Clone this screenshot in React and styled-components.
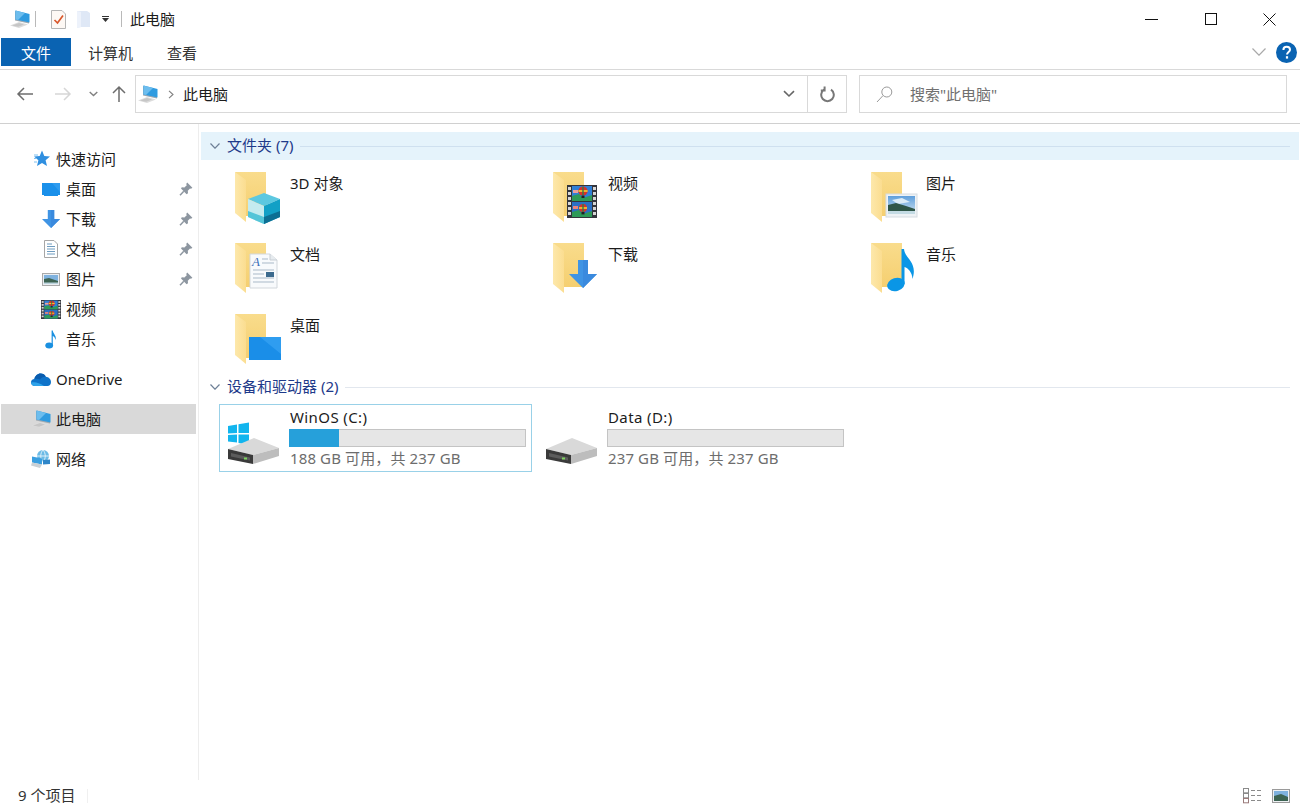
import React from 'react'
import styled, { createGlobalStyle } from 'styled-components'

const Global = createGlobalStyle`
  html, body { margin: 0; padding: 0; background: #fff; overflow: hidden; }
  body { font-family: "Noto Sans", "Noto Sans CJK SC", sans-serif; font-size: 15px; color: #1c1c1c; }
  * { box-sizing: border-box; }
  svg { display: block; flex-shrink: 0; }
`

const Window = styled.div`
  width: 1300px;
  height: 811px;
  display: flex;
  flex-direction: column;
`
const TitleBar = styled.div`
  height: 38px;
  display: flex;
  align-items: center;
  padding: 0 1px 0 10px;
`
const QuickSep = styled.span`
  width: 1px;
  height: 16px;
  background: #b9b9b9;
  margin: 0 ${p => p.$right}px 0 ${p => p.$left}px;
`
const TitleText = styled.span`
  font-size: 15px;
  line-height: 20px;
`
const WinControls = styled.div`
  margin-left: auto;
  display: flex;
`
const WinBtn = styled.div`
  width: 59px;
  height: 38px;
  display: flex;
  align-items: center;
  justify-content: center;
`
const Tabs = styled.div`
  height: 32px;
  display: flex;
  align-items: flex-start;
  border-bottom: 1px solid #d9d9d9;
  padding: 0 3px 0 1px;
`
const Tab = styled.div`
  height: 28px;
  padding: 0 ${p => (p.$file ? 20 : 17)}px;
  display: flex;
  align-items: center;
  font-size: 15px;
  background: ${p => (p.$file ? '#0a63b2' : 'transparent')};
  color: ${p => (p.$file ? '#fff' : '#333')};
`
const TabRight = styled.div`
  margin-left: auto;
  height: 28px;
  display: flex;
  align-items: center;
  gap: 10px;
`
const NavBar = styled.div`
  height: 54px;
  display: flex;
  align-items: flex-start;
  padding: 5px 0 0 0;
  border-bottom: 1px solid #d0d0d0;
`
const NavBtns = styled.div`
  width: 135px;
  height: 38px;
  padding-left: 16px;
  display: flex;
  align-items: center;
`
const AddressBox = styled.div`
  width: 712px;
  height: 38px;
  border: 1px solid #d9d9d9;
  display: flex;
  align-items: center;
  padding-left: 2px;
`
const Crumb = styled.span`
  font-size: 15px;
  margin: 0 0 2px 9px;
`
const AddrBtn = styled.div`
  width: ${p => p.$w}px;
  height: 36px;
  display: flex;
  align-items: center;
  justify-content: center;
  border-left: ${p => (p.$line ? '1px solid #d9d9d9' : 'none')};
  margin-left: ${p => (p.$auto ? 'auto' : 0)};
`
const SearchBox = styled.div`
  width: 428px;
  height: 38px;
  margin-left: 12px;
  border: 1px solid #d9d9d9;
  display: flex;
  align-items: center;
  padding-left: 16px;
  gap: 17px;
  color: #707070;
  font-size: 15px;
`
const SearchText = styled.span`
  margin-bottom: 2px;
`
const Body = styled.div`
  flex: 1;
  display: flex;
  min-height: 0;
`
const Sidebar = styled.nav`
  width: 199px;
  border-right: 1px solid #ededed;
  padding: 20px 0 0 1px;
  display: flex;
  flex-direction: column;
  gap: 10px;
`
const NavGroup = styled.div`
  display: flex;
  flex-direction: column;
`
const NavRow = styled.div`
  width: 195px;
  height: 30px;
  display: flex;
  align-items: center;
  gap: 5px;
  padding-left: ${p => (p.$child ? 40 : 30)}px;
  padding-right: 3px;
  background: ${p => (p.$active ? '#d9d9d9' : 'transparent')};
  font-size: 15px;
`
const NavLabel = styled.span`
  margin-bottom: ${p => (p.$latin ? 0 : 2)}px;
`
const Pin = styled.span`
  margin-left: auto;
`
const Main = styled.main`
  flex: 1;
  padding: 8px 1px 0 2px;
`
const SectionHead = styled.div`
  height: 28px;
  display: flex;
  align-items: center;
  padding: 0 9px 0 9px;
  gap: 7px;
  color: #1e3a8a;
  font-size: 15px;
  background: ${p => (p.$hot ? '#e5f3fb' : 'transparent')};
  margin-top: ${p => p.$top || 0}px;
`
const SectionLabel = styled.span`
  margin-bottom: 3px;
`
const HeadLine = styled.span`
  flex: 1;
  height: 1px;
  background: ${p => (p.$hot ? '#cfe0ef' : '#e2e7ee')};
`
const FolderGrid = styled.div`
  display: grid;
  grid-template-columns: repeat(3, 318px);
  row-gap: 15px;
  margin: 8px 0 0 18px;
`
const FolderItem = styled.div`
  height: 56px;
  padding-left: 13px;
  display: flex;
  gap: 8px;
`
const ItemName = styled.span`
  font-size: 15px;
  line-height: 20px;
  padding-top: 5px;
`
const DriveGrid = styled.div`
  display: grid;
  grid-template-columns: repeat(3, 318px);
  margin: 3px 0 0 18px;
`
const DriveCard = styled.div`
  width: 313px;
  height: 68px;
  border: 1px solid ${p => (p.$selected ? '#99d1e8' : 'transparent')};
  padding: 2px 5px 5px 7px;
  display: flex;
  gap: 10px;
`
const DriveIconWrap = styled.div`
  align-self: flex-end;
`
const DriveInfo = styled.div`
  flex: 1;
  display: flex;
  flex-direction: column;
`
const DriveName = styled.div`
  flex: none;
  height: 20px;
  line-height: 20px;
  font-size: 15px;
  padding-left: 1px;
  letter-spacing: 0.4px;
`
const DriveBar = styled.div`
  flex: none;
  height: 18px;
  width: 237px;
  margin-top: 2px;
  background: #e6e6e6;
  border: 1px solid #c4c4c4;
`
const DriveFill = styled.div`
  height: 18px;
  background: #26a0da;
  margin: -1px 0 0 -1px;
`
const DriveFree = styled.div`
  flex: none;
  height: 20px;
  line-height: 20px;
  margin-top: 1px;
  padding-left: 1px;
  color: #6d6d6d;
  font-size: 15px;
  letter-spacing: 0.12px;
`
const StatusBar = styled.footer`
  height: 31px;
  display: flex;
  align-items: center;
  padding: 0 10px 0 18px;
  font-size: 15px;
  color: #333;
`
const StatusText = styled.span`
  margin-bottom: 2px;
`
const StatusSep = styled.span`
  width: 1px;
  height: 14px;
  background: #f0f0f0;
  margin-left: 12px;
`
const ViewBtns = styled.div`
  margin-left: auto;
  display: flex;
  gap: 10px;
  align-items: center;
`

const PcIcon = ({ size = 20 }) => (
  <svg width={size} height={size * 0.9} viewBox="0 0 20 18">
    <polygon points="0,15.5 9,12 18,14.5 9,18" fill="#dcdcdc" />
    <polygon points="2,15.5 9,13 14,14.5 8,16.8" fill="#c6c6c6" />
    <polygon points="5,1 19,4.5 19,13.5 5,10.5" fill="#9fa9b1" />
    <polygon points="5.5,0.5 19.5,4 19.5,12.5 5.5,9.5" fill="#2f9be0" />
    <polygon points="5.5,0.5 15,3 8,9.9 5.5,9.5" fill="#6cbdee" />
  </svg>
)

const Chevron = ({ w = 10, h = 6, color = '#777', sw = 1.2 }) => (
  <svg width={w} height={h} viewBox={`0 0 ${w} ${h}`}>
    <path d={`M0.5 0.5 L${w / 2} ${h - 0.8} L${w - 0.5} 0.5`} fill="none" stroke={color} strokeWidth={sw} />
  </svg>
)

const StarIcon = () => (
  <svg width="20" height="18" viewBox="0 0 20 18">
    <polygon points="11,0.5 13.3,6 19,6.4 14.6,10.2 16,16 11,13 6,16 7.4,10.2 3,6.4 8.7,6" fill="#2f8fe0" />
    <path d="M3 5 H7 M3 8.5 H6 M3 12 H6" stroke="#7fc0ef" strokeWidth="1" />
  </svg>
)
const DesktopSmall = () => (
  <svg width="20" height="15" viewBox="0 0 20 15">
    <rect x="1" y="1" width="18" height="13" fill="#1a90ea" />
    <polygon points="11,1 19,1 19,10" fill="#2e9cef" />
    <rect x="1" y="13" width="2" height="1" fill="#fff" />
    <rect x="17" y="13" width="2" height="1" fill="#fff" />
  </svg>
)
const ArrowDown = ({ w = 20, h = 18 }) => (
  <svg width={w} height={h} viewBox="0 0 28 28">
    <polygon points="9,0 19,0 19,14 28,14 14,28 0,14 9,14" fill="#3f94e4" />
    <polygon points="14,0 19,0 19,14 28,14 14,28" fill="#3a8ade" />
  </svg>
)
const DocSmall = () => (
  <svg width="20" height="18" viewBox="0 0 20 18">
    <path d="M3.5 0.5 H13 L16.5 4 V17.5 H3.5 Z" fill="#fff" stroke="#a6a6a6" />
    <path d="M6 4 H11 M6 6.5 H14 M6 9 H14 M6 11.5 H14 M6 14 H14" stroke="#6f9cc0" strokeWidth="1" />
  </svg>
)
const PicSmall = () => (
  <svg width="20" height="15" viewBox="0 0 20 15">
    <rect x="1.5" y="1.5" width="17" height="12" fill="#eaeef2" stroke="#a9a9a9" />
    <rect x="3" y="3" width="14" height="9" fill="#7fb2df" />
    <polygon points="3,7 8,6 17,9 17,12 3,12" fill="#3d6453" />
    <rect x="3" y="10.5" width="14" height="1.5" fill="#bcd4de" />
  </svg>
)
const Balloon = ({ cy, r }) => (
  <g>
    <circle cx="16" cy={cy} r={r} fill="#d8322a" />
    <path d={`M${16 - r} ${cy} H${16 + r}`} stroke="#f2c230" strokeWidth="1.8" />
    <path d={`M16 ${cy - r} V${cy + r}`} stroke="#2f7d4a" strokeWidth="1.4" />
    <rect x="14.5" y={cy + r} width="3" height="2.4" fill="#222" />
  </g>
)
const FilmStrip = ({ w = 20, h = 19 }) => (
  <svg width={w} height={h} viewBox="0 0 30 33" preserveAspectRatio="none">
    <rect x="0" y="0" width="30" height="33" fill="#33353c" />
    <rect x="5" y="1" width="20" height="15" fill="#2f7fd6" />
    <rect x="5" y="17" width="20" height="15" fill="#2a6fc4" />
    <polygon points="5,16 5,11 12,9 16,13 25,10 25,16" fill="#2e9a58" />
    <polygon points="5,32 5,27 12,25 16,29 25,26 25,32" fill="#2e9a58" />
    <rect x="6" y="5" width="5" height="3" fill="#e9a0a0" />
    <rect x="6" y="21" width="5" height="3" fill="#e8847c" />
    <Balloon cy={6} r={4.6} />
    <Balloon cy={23} r={4} />
    {[2, 7, 12, 17, 22, 27].map(y => (
      <React.Fragment key={y}>
        <rect x="1" y={y} width="3" height="3" fill="#d6d6d6" />
        <rect x="26" y={y} width="3" height="3" fill="#d6d6d6" />
      </React.Fragment>
    ))}
  </svg>
)
const NoteSmall = () => (
  <svg width="20" height="19" viewBox="0 0 20 19">
    <ellipse cx="8.2" cy="15.5" rx="3.9" ry="3" fill="#1a90e0" />
    <path d="M10.6 15 V0.5 H11.8 C12 4 16 5.5 14.5 10 C14 7.5 13 6.5 11.8 6 V15 Z" fill="#1a90e0" />
  </svg>
)
const PinIcon = () => (
  <svg width="14" height="14" viewBox="0 0 14 14">
    <path d="M8.2 0.6 L13.4 5.8 L12 6.8 L11 6.4 L8.8 8.8 L9 11.2 L7.6 12.2 L2 6.6 L2.8 5.2 L5.4 5.4 L7.8 3.2 L7.2 2 Z" fill="#8d96a0" />
    <path d="M4.8 9.2 L1 13.2" stroke="#8d96a0" strokeWidth="1.5" />
  </svg>
)
const CloudIcon = () => (
  <svg width="20" height="15" viewBox="0 0 20 15">
    <path d="M4 14 C1.5 14 0 12.5 0 10.6 C0 8.6 1.5 7.2 3.4 7.1 C4 4 6.6 1.6 9.6 1.6 C12 1.6 13.8 2.8 14.8 4.8 C17.8 5 20 7.2 20 10 C20 12.4 18.6 14 16.4 14 Z" fill="#0f73c9" />
    <path d="M3.4 7.1 C4 4 6.6 1.6 9.6 1.6 C12 1.6 13.8 2.8 14.8 4.8 C12 4.6 10 6 9 7.6 C7.4 6.6 5 6.6 3.4 7.1 Z" fill="#0a5cae" />
    <path d="M4 14 C1.5 14 0 12.5 0 10.6 C4 9.6 8 10.6 13 14 Z" fill="#2ea3ea" />
  </svg>
)
const NetIcon = () => (
  <svg width="20" height="18" viewBox="0 0 20 18">
    <circle cx="12" cy="6" r="6" fill="#6cbbe6" />
    <path d="M12 0 C9 3 9 9 12 12 M6 6 H18 M12 0 C15 3 15 9 12 12" stroke="#e6f4fb" strokeWidth="0.9" fill="none" />
    <polygon points="1,6.5 11,8.5 11,14.5 1,12.5" fill="#3a9fe0" />
    <polygon points="1,12.5 11,14.5 9,18 0,15.5" fill="#c9d0d5" />
    <polygon points="12,10 19,9.5 19,14 12,14.5" fill="#2f86c9" />
  </svg>
)

const Folder = ({ children }) => (
  <svg width="50" height="56" viewBox="0 0 50 56">
    <defs>
      <linearGradient id="fBack" x1="0" y1="0" x2="0" y2="1">
        <stop offset="0" stopColor="#f9dc8c" />
        <stop offset="1" stopColor="#f5cf70" />
      </linearGradient>
      <linearGradient id="fFront" x1="0" y1="0" x2="1" y2="0">
        <stop offset="0" stopColor="#fde8ab" />
        <stop offset="1" stopColor="#fbdd90" />
      </linearGradient>
      <linearGradient id="picSky" x1="0" y1="0" x2="0" y2="1">
        <stop offset="0" stopColor="#5f9fdc" />
        <stop offset="1" stopColor="#cfe3f0" />
      </linearGradient>
    </defs>
    <polygon points="3,4 34,4 34,48 14,48" fill="url(#fBack)" />
    <polygon points="3,4 14,12 14,54 3,45" fill="url(#fFront)" />
    <polygon points="14,48 19,48 14,53" fill="#fff" />
    {children}
  </svg>
)

const Cube = () => (
  <g>
    <polygon points="32,25 48,31 32,38 16,31" fill="#5cc8e0" />
    <polygon points="16,31 32,38 32,56 16,49" fill="#c4ebef" />
    <polygon points="48,31 32,38 32,56 48,49" fill="#12a0c6" />
    <polygon points="16,43 32,49 32,56 16,49" fill="#54c5d8" />
    <polygon points="48,43 32,49 32,56 48,49" fill="#0c6f93" />
  </g>
)
const BigDoc = () => (
  <g>
    <path d="M18 15 H38 L45 21 V49 H18 Z" fill="#f8fafc" stroke="#d2d7dc" />
    <path d="M38 15 V21 H45" fill="#e6ebef" stroke="#c8ced4" />
    <text x="20" y="27" fontFamily="Liberation Serif, serif" fontStyle="italic" fontSize="13" fill="#3b6fb8">A</text>
    <path d="M30 20 H36 M30 24 H42 M21 31 H42 M21 35 H32 M21 39 H42 M21 43 H42" stroke="#a9b9c8" strokeWidth="1" />
    <rect x="34" y="33" width="8" height="5" fill="#3c6a8e" />
  </g>
)
const BigDesktop = () => (
  <g>
    <rect x="17" y="27" width="32" height="23" fill="#1a8ee8" />
    <polygon points="28,27 49,27 49,44" fill="#2f9df0" />
  </g>
)
const BigPicture = () => (
  <g>
    <rect x="18" y="26" width="31" height="23" fill="#eef2f5" stroke="#d6dce1" />
    <rect x="20" y="28" width="27" height="18" fill="url(#picSky)" />
    <polygon points="24,32 34,30 42,34 30,36" fill="#dcecf7" />
    <polygon points="20,37 28,35 38,38 47,41 47,46 20,46" fill="#2f5648" />
    <rect x="20" y="43" width="27" height="3" fill="#c4dbe4" />
  </g>
)
const BigNote = () => (
  <g>
    <ellipse cx="28" cy="45.5" rx="9" ry="6.5" fill="#0a96e6" transform="rotate(-18 28 45.5)" />
    <path d="M33.5 45 V10 H36 C37 20 50 23 44.5 40 C44 33 40 29 36.5 28 V45 Z" fill="#0a96e6" />
  </g>
)

const DriveIcon = ({ win }) => (
  <svg width="52" height="44" viewBox="0 0 52 44">
    {win && (
      <g fill="#12b5ee">
        <polygon points="1,4 10,2.5 10,11 1,11.5" />
        <polygon points="11.5,2.2 22,0.5 22,11 11.5,11" />
        <polygon points="1,13 10,12.5 10,20.5 1,19.5" />
        <polygon points="11.5,12.5 22,12.5 22,23 11.5,21" />
      </g>
    )}
    <polygon points="1,27 27,16 52,26 26,33" fill="#d9d9d9" />
    <polygon points="26,33 52,26 52,34 26,42" fill="#bdbdbd" />
    <polygon points="1,27 26,33 26,42 1,37" fill="#3a3a3a" />
    <polygon points="4,31 23,35.5 23,38.5 4,34.5" fill="#5c5c5c" />
    <rect x="17" y="35.5" width="3" height="2" fill="#7fd860" />
  </svg>
)

const topFolders = [
  { name: '3D 对象', over: <Cube /> },
  { name: '视频', over: <svg x="17" y="17" width="30" height="33"><FilmStrip w={30} h={33} /></svg> },
  { name: '图片', over: <BigPicture /> },
  { name: '文档', over: <BigDoc /> },
  { name: '下载', over: <svg x="19" y="21" width="28" height="28"><ArrowDown w={28} h={28} /></svg> },
  { name: '音乐', over: <BigNote /> },
  { name: '桌面', over: <BigDesktop /> },
]

const quick = [
  { name: '桌面', icon: <DesktopSmall />, pin: true },
  { name: '下载', icon: <ArrowDown />, pin: true },
  { name: '文档', icon: <DocSmall />, pin: true },
  { name: '图片', icon: <PicSmall />, pin: true },
  { name: '视频', icon: <FilmStrip /> },
  { name: '音乐', icon: <NoteSmall /> },
]

export default function App() {
  return (
    <Window>
      <Global />
      <TitleBar>
        <PcIcon />
        <QuickSep $left={5} $right={15} />
        <svg width="15" height="19" viewBox="0 0 15 19">
          <path d="M0.5 0.5 H11 L14.5 4 V18.5 H0.5 Z" fill="#fdf8f4" stroke="#b5b5b5" />
          <path d="M3.5 10 L6.5 13 L12 5.5" fill="none" stroke="#d9572b" strokeWidth="1.7" />
        </svg>
        <svg width="13" height="17" viewBox="0 0 13 17" style={{ marginLeft: 11 }}>
          <polygon points="0,0 10,0 13,2 13,16 4,16 0,17" fill="#dfe8f6" />
          <polygon points="0,0 4,1 4,16 0,17" fill="#edf2fb" />
        </svg>
        <svg width="7" height="6" viewBox="0 0 7 6" style={{ marginLeft: 12 }}>
          <rect x="0" y="0" width="7" height="1" fill="#333" />
          <polygon points="0,2 7,2 3.5,6" fill="#333" />
        </svg>
        <QuickSep $left={12} $right={8} />
        <TitleText>此电脑</TitleText>
        <WinControls>
          <WinBtn>
            <svg width="13" height="1" viewBox="0 0 13 1"><rect width="13" height="1" fill="#111" /></svg>
          </WinBtn>
          <WinBtn>
            <svg width="12" height="12" viewBox="0 0 12 12"><rect x="0.5" y="0.5" width="11" height="11" fill="none" stroke="#111" /></svg>
          </WinBtn>
          <WinBtn>
            <svg width="13" height="13" viewBox="0 0 13 13"><path d="M0.5 0.5 L12.5 12.5 M12.5 0.5 L0.5 12.5" stroke="#111" strokeWidth="1" /></svg>
          </WinBtn>
        </WinControls>
      </TitleBar>

      <Tabs>
        <Tab $file>文件</Tab>
        <Tab>计算机</Tab>
        <Tab>查看</Tab>
        <TabRight>
          <Chevron w={14} h={8} color="#a9a9a9" />
          <svg width="21" height="21" viewBox="0 0 21 21">
            <circle cx="10.5" cy="10.5" r="10.5" fill="#0a63b2" />
            <path d="M7.4 8 C7.4 5.8 9 4.8 10.7 4.8 C12.6 4.8 14 6 14 7.7 C14 10 11 10 11 12.6" fill="none" stroke="#fff" strokeWidth="2" />
            <rect x="9.9" y="14.2" width="2.2" height="2.4" fill="#fff" />
          </svg>
        </TabRight>
      </Tabs>

      <NavBar>
        <NavBtns>
          <svg width="17" height="14" viewBox="0 0 17 14"><path d="M17 7 H2 M8 1 L2 7 L8 13" fill="none" stroke="#6d6d6d" strokeWidth="1.5" /></svg>
          <svg width="17" height="14" viewBox="0 0 17 14" style={{ marginLeft: 22 }}><path d="M0 7 H15 M9 1 L15 7 L9 13" fill="none" stroke="#d6d6d6" strokeWidth="1.5" /></svg>
          <svg width="9" height="6" viewBox="0 0 9 6" style={{ marginLeft: 17 }}><path d="M0.7 1 L4.5 4.6 L8.3 1" fill="none" stroke="#808080" strokeWidth="1.4" /></svg>
          <svg width="14" height="18" viewBox="0 0 14 18" style={{ marginLeft: 14 }}><path d="M7 17 V2 M1 8 L7 2 L13 8" fill="none" stroke="#6d6d6d" strokeWidth="1.5" /></svg>
        </NavBtns>
        <AddressBox>
          <PcIcon />
          <svg width="6" height="9" viewBox="0 0 6 9" style={{ marginLeft: 10 }}><path d="M1 0.8 L5 4.5 L1 8.2" fill="none" stroke="#808080" strokeWidth="1.1" /></svg>
          <Crumb>此电脑</Crumb>
          <AddrBtn $w={37} $auto>
            <svg width="12" height="8" viewBox="0 0 12 8"><path d="M1 1.2 L6 6 L11 1.2" fill="none" stroke="#666" strokeWidth="1.6" /></svg>
          </AddrBtn>
          <AddrBtn $w={39} $line>
            <svg width="15" height="17" viewBox="0 0 15 17"><path d="M4 3.6 A6.3 6.3 0 1 0 11 3.6 M4.6 0.6 V4.4 H0.8" fill="none" stroke="#777" strokeWidth="2" /></svg>
          </AddrBtn>
        </AddressBox>
        <SearchBox>
          <svg width="17" height="17" viewBox="0 0 17 17"><circle cx="10.8" cy="6" r="5" fill="none" stroke="#9a9a9a" /><path d="M7 9.6 L1 16" stroke="#9a9a9a" /></svg>
          <SearchText>搜索"此电脑"</SearchText>
        </SearchBox>
      </NavBar>

      <Body>
        <Sidebar>
          <NavGroup>
            <NavRow><StarIcon /><NavLabel>快速访问</NavLabel></NavRow>
            {quick.map(q => (
              <NavRow $child key={q.name}>
                {q.icon}
                <NavLabel>{q.name}</NavLabel>
                {q.pin && <Pin><PinIcon /></Pin>}
              </NavRow>
            ))}
          </NavGroup>
          <NavGroup>
            <NavRow><CloudIcon /><NavLabel $latin>OneDrive</NavLabel></NavRow>
          </NavGroup>
          <NavGroup>
            <NavRow $active><PcIcon /><NavLabel>此电脑</NavLabel></NavRow>
          </NavGroup>
          <NavGroup>
            <NavRow><NetIcon /><NavLabel>网络</NavLabel></NavRow>
          </NavGroup>
        </Sidebar>

        <Main>
          <SectionHead $hot>
            <Chevron w={10} h={6} color="#6d7f96" />
            <SectionLabel>文件夹 (7)</SectionLabel>
            <HeadLine $hot />
          </SectionHead>
          <FolderGrid>
            {topFolders.map(f => (
              <FolderItem key={f.name}>
                <Folder>{f.over}</Folder>
                <ItemName>{f.name}</ItemName>
              </FolderItem>
            ))}
          </FolderGrid>
          <SectionHead $top={7}>
            <Chevron w={10} h={6} color="#6d7f96" />
            <SectionLabel>设备和驱动器 (2)</SectionLabel>
            <HeadLine />
          </SectionHead>
          <DriveGrid>
            <DriveCard $selected>
              <DriveIconWrap><DriveIcon win /></DriveIconWrap>
              <DriveInfo>
                <DriveName>WinOS (C:)</DriveName>
                <DriveBar><DriveFill style={{ width: `${((237 - 188) / 237) * 237 + 1}px` }} /></DriveBar>
                <DriveFree>188 GB 可用，共 237 GB</DriveFree>
              </DriveInfo>
            </DriveCard>
            <DriveCard>
              <DriveIconWrap><DriveIcon /></DriveIconWrap>
              <DriveInfo>
                <DriveName>Data (D:)</DriveName>
                <DriveBar />
                <DriveFree>237 GB 可用，共 237 GB</DriveFree>
              </DriveInfo>
            </DriveCard>
          </DriveGrid>
        </Main>
      </Body>

      <StatusBar>
        <StatusText>9 个项目</StatusText>
        <StatusSep />
        <ViewBtns>
          <svg width="19" height="16" viewBox="0 0 19 16">
            <rect x="0.5" y="0.5" width="5" height="4.3" fill="#fff" stroke="#8a8a8a" />
            <rect x="0.5" y="5.5" width="5" height="4.3" fill="#fff" stroke="#8a8a8a" />
            <rect x="0.5" y="10.5" width="5" height="4.3" fill="#fff" stroke="#9a7a7a" />
            <path d="M8 2.5 H12 M14 2.5 H18 M8 7.5 H12 M14 7.5 H18 M8 12.5 H12 M14 12.5 H18" stroke="#8a8a8a" />
          </svg>
          <svg width="18" height="14" viewBox="0 0 18 14">
            <rect x="0.5" y="0.5" width="17" height="13" fill="#eef1f4" stroke="#9a9a9a" />
            <rect x="2" y="2" width="14" height="10" fill="#7fb2df" />
            <polygon points="2,7 9,5 16,8 16,12 2,12" fill="#3d6453" />
          </svg>
        </ViewBtns>
      </StatusBar>
    </Window>
  )
}
